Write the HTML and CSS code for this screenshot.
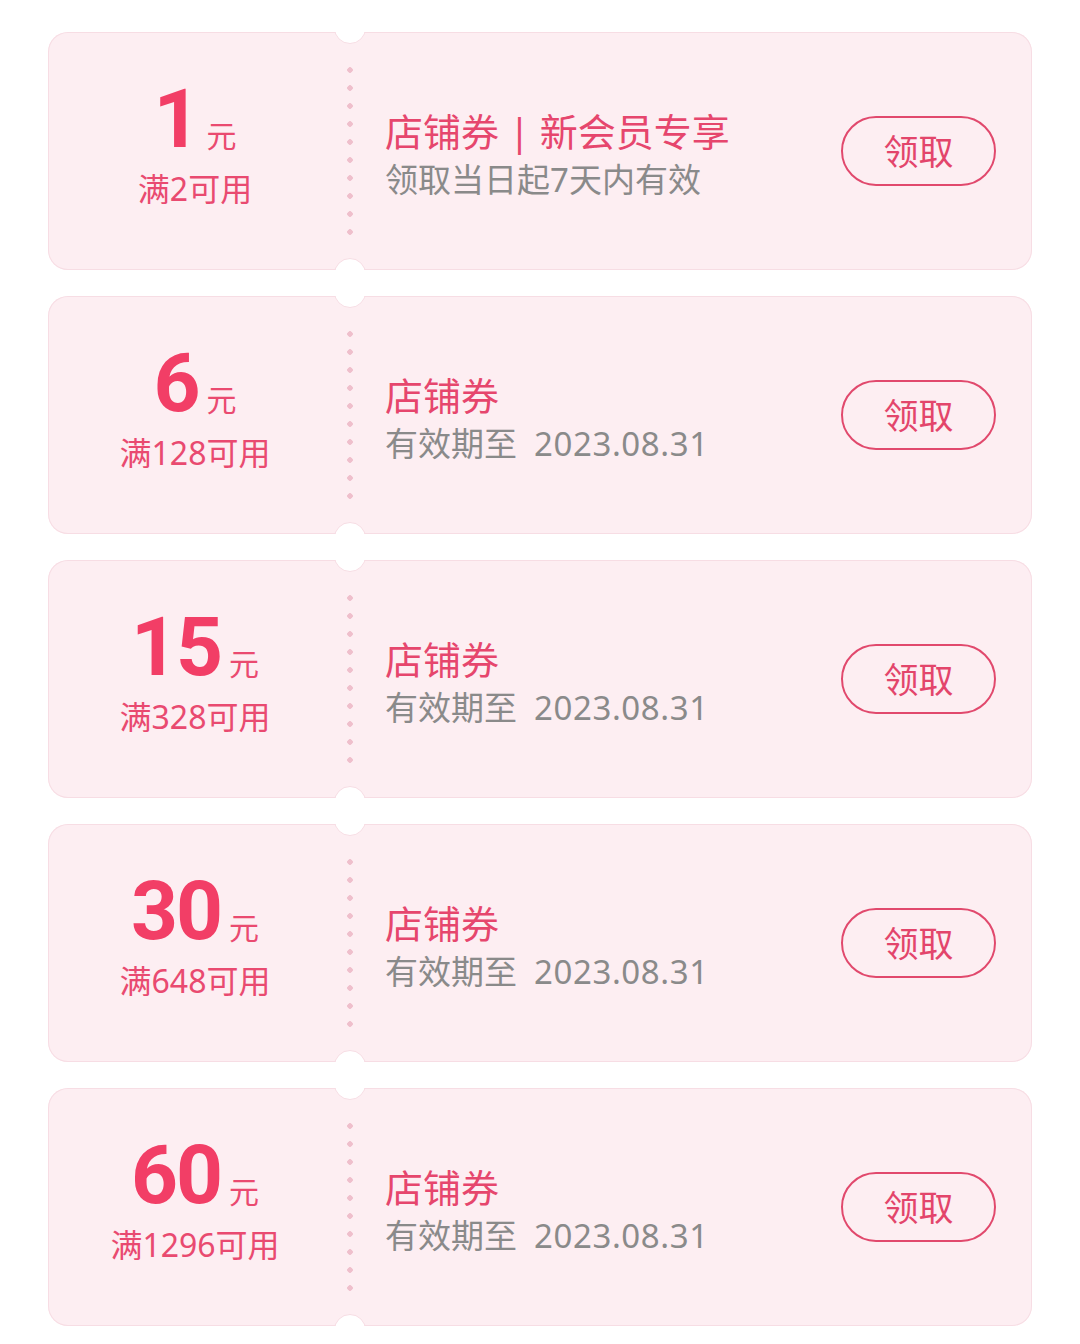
FILE: index.html
```html
<!DOCTYPE html>
<html lang="zh-CN">
<head>
    <meta charset="UTF-8">
    <meta name="viewport" content="width=device-width, initial-scale=1.0">
    <title>店铺优惠券</title>
    <link rel="stylesheet" href="styles.css">
</head>
<body>
    <div class="coupon-list">
        <!-- 新会员专享 -->
        <div class="coupon">
            <div class="coupon-value">
                <div class="amount"><span class="num">1</span><span class="unit">元</span></div>
                <div class="limit">满2可用</div>
            </div>
            <div class="coupon-divider"></div>
            <div class="coupon-info">
                <div class="title">店铺券 | 新会员专享</div>
                <div class="desc">领取当日起7天内有效</div>
            </div>
            <button class="coupon-btn">领取</button>
        </div>

        <div class="coupon">
            <div class="coupon-value">
                <div class="amount"><span class="num">6</span><span class="unit">元</span></div>
                <div class="limit">满128可用</div>
            </div>
            <div class="coupon-divider"></div>
            <div class="coupon-info">
                <div class="title">店铺券</div>
                <div class="desc">有效期至<span class="date">2023.08.31</span></div>
            </div>
            <button class="coupon-btn">领取</button>
        </div>

        <div class="coupon">
            <div class="coupon-value">
                <div class="amount"><span class="num">15</span><span class="unit">元</span></div>
                <div class="limit">满328可用</div>
            </div>
            <div class="coupon-divider"></div>
            <div class="coupon-info">
                <div class="title">店铺券</div>
                <div class="desc">有效期至<span class="date">2023.08.31</span></div>
            </div>
            <button class="coupon-btn">领取</button>
        </div>

        <div class="coupon">
            <div class="coupon-value">
                <div class="amount"><span class="num">30</span><span class="unit">元</span></div>
                <div class="limit">满648可用</div>
            </div>
            <div class="coupon-divider"></div>
            <div class="coupon-info">
                <div class="title">店铺券</div>
                <div class="desc">有效期至<span class="date">2023.08.31</span></div>
            </div>
            <button class="coupon-btn">领取</button>
        </div>

        <div class="coupon">
            <div class="coupon-value">
                <div class="amount"><span class="num">60</span><span class="unit">元</span></div>
                <div class="limit">满1296可用</div>
            </div>
            <div class="coupon-divider"></div>
            <div class="coupon-info">
                <div class="title">店铺券</div>
                <div class="desc">有效期至<span class="date">2023.08.31</span></div>
            </div>
            <button class="coupon-btn">领取</button>
        </div>
    </div>
</body>
</html>
```

FILE: styles.css
```css
body {
    margin: 0;
    background: #ffffff;
    font-family: "Noto Sans", "Noto Sans CJK SC", sans-serif;
}

.coupon-list {
    display: flex;
    flex-direction: column;
    gap: 26px;
    padding: 32px 48px 0 48px;
}

.coupon {
    position: relative;
    display: flex;
    align-items: center;
    height: 238px;
    overflow: hidden;
    background-color: #fdeef2;
    box-shadow: inset 0 0 0 1px #f7dde4;
    border-radius: 20px;
}

/* 上下缺口 */
.coupon::before,
.coupon::after {
    content: "";
    position: absolute;
    left: 286px;
    width: 30px;
    height: 30px;
    border-radius: 50%;
    background: #ffffff;
    border: 1px solid #f7dde4;
}
.coupon::before {
    top: -20px;
}
.coupon::after {
    bottom: -20px;
}

.coupon-value {
    width: 292px;
    display: flex;
    flex-direction: column;
    align-items: center;
    padding-bottom: 15px;
    margin-left: 1px;
}

.amount {
    display: flex;
    align-items: baseline;
    justify-content: center;
}
.num {
    font-family: Roboto, "Noto Sans", sans-serif;
    font-weight: 700;
    font-size: 82px;
    line-height: 82px;
    letter-spacing: -2px;
    color: #f23e66;
}
.unit {
    font-family: "Noto Sans CJK SC", sans-serif;
    font-size: 30px;
    margin-left: 8px;
    color: #ea4a70;
}
.limit {
    margin-top: 9px;
    font-size: 32px;
    line-height: 40px;
    color: #e94a70;
}

.coupon-divider {
    align-self: flex-start;
    width: 6px;
    height: 180px;
    margin: 29px 6px;
    background-image: radial-gradient(circle, #efbfcc 2.5px, transparent 3px);
    background-size: 6px 18px;
    background-repeat: repeat-y;
}

.coupon-info {
    flex: 1;
    padding-left: 26px;
    padding-top: 6px;
}
.title {
    font-size: 38px;
    line-height: 46px;
    color: #e6466d;
}
.desc {
    margin-top: 6px;
    font-size: 33px;
    line-height: 40px;
    color: #8a8a8a;
}
.date {
    margin-left: 17px;
    letter-spacing: 0.6px;
}

.coupon-btn {
    width: 155px;
    height: 70px;
    margin-right: 36px;
    padding: 0 0 4px 0;
    border: 2px solid #e1496d;
    border-radius: 35px;
    background: transparent;
    font-family: "Noto Sans CJK SC", sans-serif;
    font-size: 35px;
    color: #e3456b;
    cursor: pointer;
}
```
